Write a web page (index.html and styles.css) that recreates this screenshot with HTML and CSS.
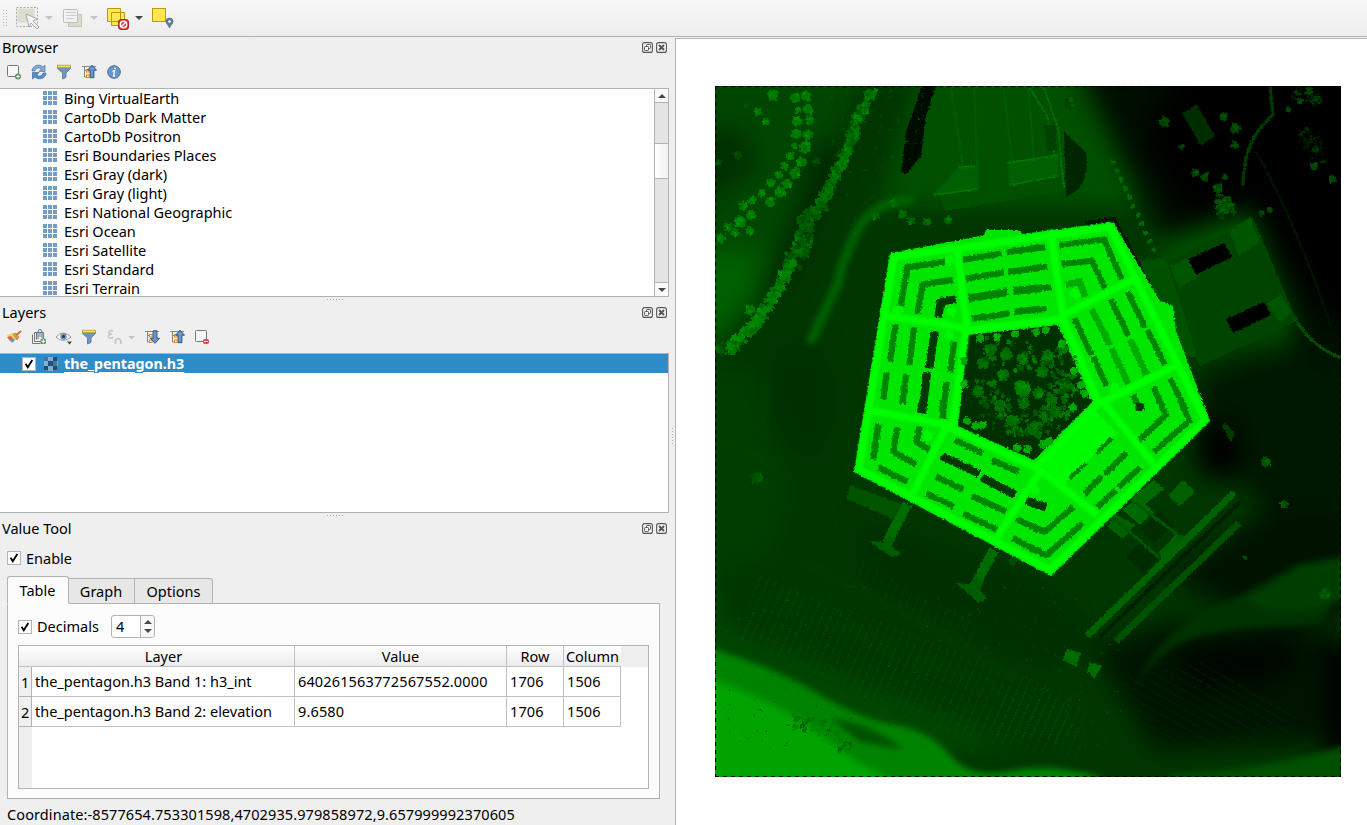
FILE: index.html
```html
<!DOCTYPE html>
<html lang="en">
<head>
<meta charset="utf-8">
<title>Map viewer</title>
<link rel="stylesheet" href="styles.css">
</head>
<body>
<svg class="defs" width="0" height="0">
  <symbol id="float" viewBox="0 0 11 11"><rect x=".6" y=".6" width="9.8" height="9.8" rx="2" fill="#f6f6f6" stroke="#555" stroke-width="1.1"/><rect x="4.5" y="2.5" width="4" height="4" rx=".8" fill="none" stroke="#555"/><rect x="2.5" y="4.5" width="4" height="4" rx=".8" fill="#f6f6f6" stroke="#555"/></symbol>
  <symbol id="close" viewBox="0 0 11 11"><rect x=".6" y=".6" width="9.8" height="9.8" rx="2" fill="#f6f6f6" stroke="#555" stroke-width="1.1"/><path d="M3 3l5 5M8 3l-5 5" stroke="#555" stroke-width="1.9"/></symbol>
  <symbol id="grid" viewBox="0 0 14 14"><path d="M0 0h4v4H0zM5 0h4v4H5zM10 0h4v4h-4zM0 5h4v4H0zM5 5h4v4H5zM10 5h4v4h-4zM0 10h4v4H0zM5 10h4v4H5zM10 10h4v4h-4z" fill="#729dc7"/></symbol>
  <symbol id="check" viewBox="0 0 14 14"><rect x=".5" y=".5" width="13" height="13" fill="#fff" stroke="#b4b4b4"/><path d="M3.6 6.800l2.200 3.500L10.300 3" fill="none" stroke="#000" stroke-width="1.800"/></symbol>
  <symbol id="funnel" viewBox="0 0 16 16"><path d="M1.500 3h13v1.500L10 9v4.500L6.500 15V9l-5-4.500z" fill="#6f96bd" stroke="#587999" stroke-width=".8"/><rect x="1.500" y="1.200" width="13" height="2.500" fill="#f9e54c" stroke="#a99528" stroke-width=".7"/></symbol>
  <symbol id="collapse" viewBox="0 0 16 16"><path d="M1 2.500h14M3.500 2.500v10.500h2M3.500 6.500h2" fill="none" stroke="#888"/><rect x="5.500" y="5.500" width="2.500" height="2.500" fill="#fff" stroke="#ee8a13"/><rect x="5.500" y="11" width="2.500" height="2.500" fill="#fff" stroke="#ee8a13"/><path d="M11 1.200l4.500 5h-2.600v7.500H9.100V6.200H6.500z" fill="#6c98c6" stroke="#2d5580"/></symbol>
  <symbol id="expand" viewBox="0 0 16 16"><path d="M1 2.500h14M3.500 2.500v10.500h2M3.500 6.500h2" fill="none" stroke="#888"/><rect x="5.500" y="5.500" width="2.500" height="2.500" fill="#fff" stroke="#ee8a13"/><rect x="5.500" y="11" width="2.500" height="2.500" fill="#fff" stroke="#ee8a13"/><path d="M11 14.300l4.500-5h-2.600V1.800H9.100v7.500H6.500z" fill="#6c98c6" stroke="#2d5580"/></symbol>
</svg>
<div class="app">
  <header class="toolbar">
    <svg width="190" height="36" viewBox="0 0 190 36">
      <path d="M3.500 10v17M6.500 10v17" stroke="#bbb" stroke-dasharray="1 2"/>
      <rect x="17.500" y="8.500" width="17" height="14" fill="#dcdccf"/>
      <rect x="16.500" y="7.500" width="21" height="19" fill="none" stroke="#aaa" stroke-dasharray="2 1.500"/>
      <path d="M26 14l12 5-5 2 6 6-2 2-6-6-2 4z" fill="#f4f4f4" stroke="#aaa"/>
      <path d="M45 16h8l-4 4zM90 16h8l-4 4z" fill="#c4c4c4"/>
      <path d="M68.500 14.500h13v12h-13z" fill="#dadace" stroke="#c4c4b8"/>
      <rect x="63.500" y="9.500" width="14" height="13" rx="1" fill="#f1f1f1" stroke="#bcbcbc"/>
      <path d="M66 12.500h10M66 15.500h10M66 18.500h8" stroke="#ccc"/>
      <path d="M107.500 8.500h13v13h-13zM111.500 12.500h13v13h-13z" fill="#fee84d" stroke="#b79a12"/>
      <rect x="118.500" y="19.500" width="10" height="10" rx="2.500" fill="#d93232" stroke="#b32626"/>
      <circle cx="123.500" cy="24.500" r="3.200" fill="none" stroke="#fff" stroke-width="1.500"/><path d="M121.500 26.500l4-4" stroke="#fff" stroke-width="1.300"/>
      <path d="M135 16h8l-4 4z" fill="#444"/>
      <rect x="152.500" y="8.500" width="13" height="13" fill="#fee84d" stroke="#b79a12"/>
      <path d="M169.500 28c-1-3-3.500-4-3.500-6.500a3.500 3.500 0 0 1 7 0c0 2.500-2.500 3.500-3.500 6.500z" fill="#5e7e98" stroke="#4b677e" stroke-width=".7"/><circle cx="169.500" cy="21.500" r="1.300" fill="#fff"/>
    </svg>
  </header>
  <div class="main">
    <aside class="docks">
      <section class="dock browser">
        <div class="title"><span>Browser</span><div class="buttons"><svg><use href="#float"/></svg><svg><use href="#close"/></svg></div></div>
        <div class="tools">
          <svg viewBox="0 0 16 16"><rect x="1.500" y="1.500" width="11" height="11" rx="1" fill="#f6f6f6" stroke="#777"/><circle cx="12" cy="12.500" r="3" fill="#5a9560"/><path d="M10.300 12.500h3.400M12 10.800v3.400" stroke="#fff"/></svg>
          <svg viewBox="0 0 16 16"><path d="M1 7c0-5 7-8 11-4l2-2v6.500H8L10.200 5C8 3 4.500 4 4 7z" fill="#82aad8" stroke="#4878ad" stroke-width=".7"/><path d="M15 9c0 5-7 8-11 4l-2.500 2V8.500H8L5.800 11C8 13 11.500 12 12 9z" fill="#5b8dc7" stroke="#3d6da3" stroke-width=".7"/></svg>
          <svg><use href="#funnel"/></svg>
          <svg><use href="#collapse"/></svg>
          <svg viewBox="0 0 16 16"><circle cx="8" cy="8" r="6.300" fill="#6595cd" stroke="#416b9c"/><circle cx="9" cy="4.500" r="1.100" fill="#fff"/><path d="M6.500 7h2l-1 5h1.500" fill="none" stroke="#fff" stroke-width="1.300"/></svg>
        </div>
        <div class="tree">
          <ul class="sources">
            <li><svg><use href="#grid"/></svg><span>Bing VirtualEarth</span></li>
            <li><svg><use href="#grid"/></svg><span>CartoDb Dark Matter</span></li>
            <li><svg><use href="#grid"/></svg><span>CartoDb Positron</span></li>
            <li><svg><use href="#grid"/></svg><span>Esri Boundaries Places</span></li>
            <li><svg><use href="#grid"/></svg><span>Esri Gray (dark)</span></li>
            <li><svg><use href="#grid"/></svg><span>Esri Gray (light)</span></li>
            <li><svg><use href="#grid"/></svg><span>Esri National Geographic</span></li>
            <li><svg><use href="#grid"/></svg><span>Esri Ocean</span></li>
            <li><svg><use href="#grid"/></svg><span>Esri Satellite</span></li>
            <li><svg><use href="#grid"/></svg><span>Esri Standard</span></li>
            <li><svg><use href="#grid"/></svg><span>Esri Terrain</span></li>
          </ul>
          <div class="scroll"><div class="arrow"><i class="up"></i></div><div class="track-a"></div><div class="thumb"></div><div class="track-b"></div><div class="arrow last"><i class="down"></i></div></div>
        </div>
      </section>
      <div class="splitter"></div>
      <section class="dock layers">
        <div class="title"><span>Layers</span><div class="buttons"><svg><use href="#float"/></svg><svg><use href="#close"/></svg></div></div>
        <div class="tools">
          <svg viewBox="0 0 16 16"><path d="M1 6l6-2 4 5-4 4-3-1z" fill="#f5d94c"/><path d="M1 8l4-1 2 3-3 2z" fill="#e85a4f"/><path d="M4 11l3-2 2 2-3 3z" fill="#6895cb"/><path d="M7 5l4 6 2-3-3-4z" fill="#d79b4b" stroke="#9c6b2d" stroke-width=".5"/><path d="M10.500 6L15 2" stroke="#c07c32" stroke-width="2"/></svg>
          <svg viewBox="0 0 16 16"><path d="M1.500 5.500v9h8M3.500 3.500v9h9v-9h-9M5.500 4v6.500" fill="none" stroke="#777"/><path d="M7 10V3q0-2.500 2-2.500T11 3v6M9 3v5" fill="none" stroke="#56799a"/><rect x="9.500" y="9.500" width="5.500" height="5.500" rx="1.500" fill="#5a9960"/><path d="M10.300 12.300h4M12.300 10.300v4" stroke="#fff"/></svg>
          <svg viewBox="0 0 16 16"><path d="M0 8q7-8 15 0-8 7-15 0z" fill="#f7f7f7" stroke="#999"/><circle cx="7.500" cy="7.500" r="3.200" fill="#6f94b9"/><circle cx="7.500" cy="7.500" r="1.500" fill="#26384b"/><path d="M11 12.500h5l-2.500 3z" fill="#444"/></svg>
          <svg><use href="#funnel"/></svg>
          <svg class="wide" viewBox="0 0 30 16"><path d="M6.500 2Q2 0 2 3.500q.5 1.500 3.500 1.500Q1 5 1.500 8q1.500 2.500 5 .500M8.500 15v-3.500q3-4 6 0V15M9 12v3M14 12v3" fill="none" stroke="#c4c4c4" stroke-width="1.500"/><path d="M22 7h7l-3.500 3.500z" fill="#c4c4c4"/></svg>
          <svg><use href="#expand"/></svg>
          <svg><use href="#collapse"/></svg>
          <svg viewBox="0 0 16 16"><rect x="1.500" y="1.500" width="11" height="11" rx="1" fill="#f6f6f6" stroke="#777"/><rect x="9" y="10" width="6" height="5" rx="2" fill="#e24249"/><path d="M10 12.500h4" stroke="#fff"/></svg>
        </div>
        <div class="tree layer-list">
          <div class="layer">
            <svg><use href="#check"/></svg>
            <svg viewBox="0 0 14 14"><rect width="14" height="14" fill="#4e83ad"/><path d="M0 0h4v4H0zM9 0h4v4H9zM4 4h5v5H4zM0 9h4v4H0zM9 9h4v4H9z" fill="#1f4f76"/><path d="M4 0h5v4H4zM0 4h4v5H0zM9 4h5v5H9zM4 9h5v5H4z" fill="#7eaed2"/><path d="M0 0h4v4H0zM9 4h4v5H9z" fill="#3e789f"/></svg>
            <span>the_pentagon.h3</span>
          </div>
        </div>
      </section>
      <div class="splitter"></div>
      <section class="dock value">
        <div class="title"><span>Value Tool</span><div class="buttons"><svg><use href="#float"/></svg><svg><use href="#close"/></svg></div></div>
        <label class="enable"><svg class="cb"><use href="#check"/></svg><span>Enable</span></label>
        <div class="tabs"><div class="tab active">Table</div><div class="tab graph">Graph</div><div class="tab options">Options</div></div>
        <div class="pane">
          <div class="decimals"><svg class="cb"><use href="#check"/></svg><span>Decimals</span><div class="spin"><b>4</b><div class="steps"><i class="up"></i><i class="down"></i></div></div></div>
          <div class="table">
            <div class="row head"><div class="corner">Layer</div><div>Value</div><div>Row</div><div>Column</div></div>
            <div class="row"><div class="num">1</div><div>the_pentagon.h3 Band 1: h3_int</div><div class="digits">640261563772567552.0000</div><div class="digits">1706</div><div class="digits">1506</div></div>
            <div class="row"><div class="num">2</div><div>the_pentagon.h3 Band 2: elevation</div><div class="digits">9.6580</div><div class="digits">1706</div><div class="digits">1506</div></div>
            <div class="gutter"></div>
          </div>
        </div>
        <div class="coord">Coordinate:-8577654.753301598,4702935.979858972,9.657999992370605</div>
      </section>
    </aside>
    <div class="handle"></div>
    <main class="canvas">
      <svg class="map" width="626" height="691" viewBox="715 86 626 691">
        <defs>
          <filter id="b3" filterUnits="userSpaceOnUse" x="690" y="60" width="680" height="745" color-interpolation-filters="sRGB"><feGaussianBlur stdDeviation="3"/></filter>
          <filter id="b12" filterUnits="userSpaceOnUse" x="650" y="20" width="760" height="830" color-interpolation-filters="sRGB"><feGaussianBlur stdDeviation="12"/></filter>
          <filter id="b1" color-interpolation-filters="sRGB"><feGaussianBlur stdDeviation="1.300"/></filter>
          <filter id="rough" filterUnits="userSpaceOnUse" x="715" y="86" width="626" height="691" color-interpolation-filters="sRGB"><feTurbulence type="fractalNoise" baseFrequency=".45" numOctaves="1" seed="4" result="n"/><feDisplacementMap in="SourceGraphic" in2="n" scale="4" xChannelSelector="R" yChannelSelector="G"/></filter>
          <filter id="leafy" filterUnits="userSpaceOnUse" x="715" y="86" width="626" height="691" color-interpolation-filters="sRGB"><feTurbulence type="fractalNoise" baseFrequency=".4" numOctaves="1" seed="9" result="n"/><feDisplacementMap in="SourceGraphic" in2="n" scale="6" xChannelSelector="R" yChannelSelector="G"/><feGaussianBlur stdDeviation=".5"/></filter>
          <pattern id="cars" width="8" height="9" patternUnits="userSpaceOnUse" patternTransform="rotate(24)"><path d="M2 0v7" stroke="#005800" stroke-width="1.300" stroke-dasharray="2 1"/></pattern>
          <pattern id="cars2" width="8" height="9" patternUnits="userSpaceOnUse" patternTransform="rotate(-60)"><path d="M2 0v7" stroke="#002800" stroke-width="1.300" stroke-dasharray="2 1"/></pattern>
        </defs>
        <rect x="715" y="86" width="626" height="691" fill="#003600"/>
        <g filter="url(#b12)">
          <path d="M680 50H870L800 230 680 380z" fill="#004600"/>
          <path d="M690 135l50-10 20 40-70 50z" fill="#002f00"/>
          <path d="M690 250h75l-10 50-60 60z" fill="#006000"/>
          <path d="M800 200l20-60 20 10-50 130-25 20z" fill="#002200"/>
          <path d="M880 205H1140L1200 350 1300 330 1250 210 1130 180 1060 50H930z" fill="#005000"/>
          <path d="M1075 50H1390V570L1290 560 1215 420 1300 340 1250 210 1160 240z" fill="#000d00"/>
          <path d="M1190 50H1390V340L1320 310 1250 200 1190 225 1145 140z" fill="#000"/>
          <path d="M1200 380l40-20 60-10 90 20v160l-110-20-80-50z" fill="#001700"/>
          <path d="M1170 580l80-60 140-20V600l-110 30z" fill="#001200"/>
          <path d="M680 500l50 130 300 120H680z" fill="#004600"/>
          <path d="M1095 650l80-30 160 10 20 110-200 10z" fill="#001400"/>
          <path d="M1180 650l80-12 50 12-30 30-90 10z" fill="#000600"/>
          <path d="M680 370l80 0 30 120-20 70-90 20z" fill="#003e00"/>
          <ellipse cx="800" cy="400" rx="35" ry="60" fill="#003000"/>
          <path d="M860 520l180 60 70 60-60 30-190-80z" fill="#002f00"/>
          <ellipse cx="1218" cy="450" rx="22" ry="30" fill="#000"/>
          <path d="M1342 640v130" stroke="#000" stroke-width="30"/>
        </g>
        <path d="M760 575L1060 690 1080 740 960 735 735 640z" fill="url(#cars)" opacity=".6"/>
        <path d="M860 560l120 65-10 30-130-70zM1000 690l90 20-10 50-90-15z" fill="url(#cars)" opacity=".4"/>
        <path d="M1120 680l90-20 90 60-20 35-120-5z" fill="url(#cars2)" opacity=".8"/>
        <g filter="url(#b3)" fill="none">
          <path d="M690 642Q770 665 815 692T895 725 950 755 1010 771 1100 777V810H690z" fill="#008400"/>
          <path d="M690 672Q780 700 835 745T960 795H690z" fill="#00a300"/>
          <path d="M830 718q40 5 75 32l-45-8z" fill="#005000"/>
          <path d="M1370 552l-72 12-68 37q-40 10-72 48-15 18-23 40 20-35 50-48 35-13 70-13 20 0 65-4l20-30z" fill="#003200"/>
          <path d="M1245 600q30-15 55-35l70-10-5 38-50 15q-40 8-70-8z" fill="#003e00"/>
          <path d="M1170 774q90 0 200-36v80h-200z" fill="#005000"/>
          <path d="M800 560l120 62 100 60" stroke="#003a00" stroke-width="8"/>
          <path d="M914 200q-42 0-58 33t-18 50l-28 60" stroke="#006400" stroke-width="9"/>
          <path d="M765 372q3 50-5 100M720 440l50 20" stroke="#004500" stroke-width="2"/>
        </g>
        <g filter="url(#rough)">
          <path d="M924 86h133l3 105-115 20-7-20-14-35 4-20z" fill="#005000"/>
          <path d="M922 86h14l-10 30-5 40-14 18-6-2 5-40z" fill="#000c00"/>
          <path d="M933 195l26-28 16-1 4 23zM1008 163l50-8 1 20-50 10z" fill="#005f00"/>
          <path d="M933 195l44-6M959 167l16-1M1008 163l50-8M1010 185l49-9" stroke="#007800" stroke-width="1.500"/>
          <path d="M951 88l12 78M974 88l4 100M1004 88l8 75M1028 88l6 70" stroke="#005c00" stroke-width="2"/>
          <path d="M1030 88l18 30 6 35M1044 88l14 40 6 60" stroke="#007000" stroke-width="1.500" fill="none"/>
          <path d="M1044 125h12v26h-9z" fill="#004000"/>
          <path d="M1064 132l22 20q5 35-20 45z" fill="#002600"/>
          <path d="M1182 113l15-8 18 31-14 10z" fill="#002d00"/>
          <path d="M1270 86l3 29q-30 25-30 70" stroke="#003c00" stroke-width="3" fill="none"/>
          <path d="M1256 152q40 70 75 175" stroke="#001600" stroke-width="2" fill="none"/>
          <path d="M1168 262l70-38 14-8 45 105-97 45-35-60z" fill="#004400"/>
          <path d="M1140 260l26-2 32 100-25-5z" fill="#005000"/>
          <path d="M1230 230l20-12 10 24-22 14zM1170 266l17-8 12 18-20 12zM1267 304l14-10 10 18-12 10z" fill="#005600"/>
          <path d="M1188 259l36-16 8 14-36 18zM1226 319l38-17 7 13-38 18z" fill="#000"/>
          <path d="M1165 258l72-32" stroke="#004a00" stroke-width="4"/>
          <path d="M1295 318q15 28 46 40" stroke="#005000" stroke-width="3" fill="none"/>
          <path d="M850 485l51 19-8 15-46-20z" fill="#005400"/>
          <path d="M907 504L887 543" stroke="#006c00" stroke-width="10"/><path d="M869 541l14 1 7-7 5 4-3 8 10 7-10 3-14-9z" fill="#005c00"/>
          <path d="M994 550l-20 37" stroke="#006c00" stroke-width="10"/><path d="M956 583l14 1 7-7 7 4-4 9 7 9-9 4-10-10z" fill="#005c00"/>
          <path d="M1154 480l10 9-21 17-12-8zM1137 498l17 14-14 13-18-15z" fill="#006800"/>
          <path d="M1183 480l12 11-15 15-12-10zM1113 513l22 12-12 14-15-12zM1177 533l14 6-27 24-6-10z" fill="#006000"/>
          <path d="M1160 512l14 13-20 18-14-14zM1143 540l18 15-18 18-17-16z" fill="#002c00"/>
          <path d="M1110 515l50 43M1132 500l55 42" stroke="#005600" stroke-width="3"/>
          <path d="M1234 493L1087 636" stroke="#006200" stroke-width="7"/><path d="M1239 523L1116 641" stroke="#005000" stroke-width="7"/>
          <path d="M1240 502L1100 637" stroke="#002000" stroke-width="4"/>
          <path d="M1067 649l14 4-5 14-13-7zM1090 662l12 4-7 12-8-7z" fill="#006c00"/>
          <path d="M1225 422l10 12-4 8-9-15z" fill="#003c00"/>
          <path d="M1085 223l29-4 36 68" stroke="#001a00" stroke-width="4" fill="none"/>
          <path d="M890 253l70-13 24-5 2-5h32l5 4 90-12 47 79 13 5 3 25 34 90-159 155-197-104z" fill="#00e600"/>
          <path d="M968 335l90-10 34 77-58 58-76-34z" fill="#003000"/>
          <g transform="translate(850 210) scale(.33333)" fill="none" stroke="#008500" stroke-width="19">
            <path d="M152 288L172 172 285 155M202 312L218 222 308 210M338 150l117-20M470 127l100-15M348 206l114-19M475 185l95-11M367 326l111-16M492 306l78-10M136 345L120 455M110 487l-10 81M192 352L178 465M168 495l-11 85M312 395l-12 92M290 515l-12 110"/>
            <path d="M355 265l117-19M490 243l80-8" stroke-width="24"/>
            <path d="M265 322l7-47 46-7M254 364L238 475M232 487L216 610" stroke="#003a00" stroke-width="24"/>
          </g>
          <g transform="translate(1030 210) scale(.33333)" fill="none" stroke="#008500" stroke-width="18">
            <path d="M0 118l46-6M0 175l52-5M0 238l64-6M0 302l50-6M88 106L222 88l53 120M95 162l91-10 39 83M133 325l52 110M190 440l40 88M243 268l52 110M293 245l52 107M352 360l53 105M370 530l30 70M420 505l48 95M308 555l17 35"/>
            <path d="M185 298l55 107M245 415l50 107M300 388l50 107M105 225l45-10 15 45" stroke="#00ac00" stroke-width="20"/>
          </g>
          <g transform="translate(850 400) scale(.33333)" fill="none" stroke="#008500" stroke-width="19">
            <path d="M280 0l-4 35M158 0v12M85 72L70 178M142 82l-12 73 68 38M208 80l-8 45 38 25M85 202l87 43M315 120l83 40M425 180l80 35M257 230l83 38M365 288l103 47M230 280l82 40M340 340l102 50M500 358l70 32M487 415l83 40"/>
            <path d="M217 0l-4 38M275 168l113 54M395 232l100 52M528 302l60 20" stroke="#003a00" stroke-width="24"/>
          </g>
          <g transform="translate(1030 400) scale(.33333)" fill="none" stroke="#008500" stroke-width="18">
            <path d="M40 200L185 20 260 100 100 255z" fill="#00fa00" stroke="none"/>
            <path d="M325 125l83-80-20-45M372 155L478 62 450 0M225 222l65-64M162 282l53-52M265 262l65-60M202 322l56-52M0 378l45 17 85-75M0 445l50 20 108-95"/>
            <path d="M198 160l48-45M118 235l50-45" stroke-width="12"/>
            <path d="M0 305l38 15M318 18l24 6" stroke="#003a00" stroke-width="24"/>
          </g>
        </g>
        <g filter="url(#b1)" fill="none" stroke="#00ff00" stroke-width="7">
          <path d="M894 257l216-30 95 193-155 150-191-101z"/>
          <path d="M966 330l97-11 36 84-63 65-84-39z"/>
          <path d="M957 248l10 80-85-13M1050 230l13 85 75-38M1177 365l-74 37 50 61M1097 515l-56-45-44 67M913 493l34-68-78-15"/>
        </g>
        <g id="trees" filter="url(#leafy)"></g>
        <path d="M715.500 86v691M715 776.500h626M1340.500 86v691M715 86.500h626" stroke="#000" stroke-width="1" stroke-dasharray="4 4" fill="none"/>
      </svg>
    </main>
  </div>
</div>
<script src="map.js"></script>
</body>
</html>
```
FILE: map.js
```js
// Scatters vegetation over the terrain; a fixed seed keeps it stable.
let seed = 11;
const rnd = () => (seed = (seed * 16807) % 2147483647) / 2147483647;
const layer = document.getElementById('trees');
function blob(x, y, r, g) {
  const c = document.createElementNS('http://www.w3.org/2000/svg', 'circle');
  c.setAttribute('cx', x.toFixed(1));
  c.setAttribute('cy', y.toFixed(1));
  c.setAttribute('r', r.toFixed(1));
  c.setAttribute('fill', `rgb(0,${Math.round(g)},0)`);
  layer.appendChild(c);
}
function tree(x, y, r, g) {
  blob(x, y, r, g);
  for (let i = 0; i < 5; i++) blob(x + (rnd() - .5) * r * 1.3, y + (rnd() - .5) * r * 1.3, r * .35, g + (rnd() - .3) * 45);
}
function along(points, n, spread, rMin, rMax, g) {
  for (let i = 0; i < n; i++) {
    const t = rnd() * (points.length - 1), k = Math.floor(t), f = t - k;
    const [x1, y1] = points[k], [x2, y2] = points[k + 1];
    blob(x1 + (x2 - x1) * f + (rnd() - .5) * spread, y1 + (y2 - y1) * f + (rnd() - .5) * spread, rMin + rnd() * (rMax - rMin), g + (rnd() - .5) * 50);
  }
}
[[773,95,5.5],[758,112,4],[766,122,3.5],[795,98,5],[806,96,5],[808,109,5],[798,110,3],[797,121,5],[810,120,4.5],[796,134,5],[808,135,5],[805,147,6],[794,146,3],[790,156,4],[801,162,5],[785,166,4],[795,173,5.5],[779,175,4],[771,183,4.5],[787,184,5],[780,192,5.5],[762,193,4],[770,202,5],[752,200,4],[743,206,4.5],[751,215,5],[740,222,6],[728,227,4],[735,233,4],[721,238,5],[750,231,4],[750,310,5]].forEach(([x,y,r]) => tree(x, y, r, 118));
[[816,161,3.5],[738,155,4],[718,162,4],[746,105,3]].forEach(([x,y,r]) => tree(x, y, r, 75));
along([[874,88],[857,120],[846,155],[833,180],[820,206]], 300, 9, 1.2, 3, 110);
along([[820,206],[806,224],[803,245],[790,265]], 200, 15, 1.2, 3, 92);
along([[790,265],[775,294],[755,325],[728,350]], 280, 9, 1.2, 3, 122);
along([[724,345],[715,352]], 12, 10, 1, 3, 100);
[[902,214],[911,221],[927,222],[948,220],[875,216],[895,203]].forEach(([x,y]) => tree(x, y, 4, 98));
for (let i = 0; i < 11; i++) tree(1113 + i * 4.1, 162 + i * 8.8, 2.6, 100);
[[1164,122,5],[1182,147,3],[1195,173,4],[1205,177,4],[1224,117,4],[1235,128,5],[1235,145,4],[1218,188,5],[1225,177,3],[1262,213,3],[1270,210,3],[1314,166,4],[1332,179,4],[1288,110,3],[1300,101,3],[1309,91,4],[1317,99,4],[1070,104,6]].forEach(([x,y,r]) => tree(x, y, r, 68));
along([[1222,200],[1226,211]], 90, 17, 1, 2.5, 75);
along([[1305,130],[1320,155]], 60, 16, .7, 2, 38);
along([[1290,88],[1318,100]], 30, 14, .7, 2, 45);
[[990,350],[1006,354],[1003,375],[1048,356],[1063,348],[1023,358],[1020,386],[983,363],[978,391],[1000,406],[1042,372],[1039,393],[1065,384],[1052,400],[1012,421],[1033,429],[1055,412],[1024,403]].forEach(([x,y]) => tree(x, y, 6, 108));
along([[985,350],[1065,365],[1060,410],[1020,430],[985,390]], 260, 28, .8, 2.8, 105);
[[980,338],[997,337],[1015,334],[1036,332],[1046,330],[1062,344],[1074,371],[1081,385],[1085,394],[967,421],[976,426],[983,425],[964,361],[964,384],[1017,448],[1027,450],[1043,445],[1049,441],[1073,407]].forEach(([x,y]) => tree(x, y, 4, 165));
tree(1023, 389, 8, 120);
[[951,312],[949,335],[1075,294],[950,260],[898,310],[928,436],[1035,490],[1115,388]].forEach(([x,y]) => blob(x, y, 5, 248));
[[1325,594,6],[1266,462,5],[757,478,6],[1013,561,4],[1245,557,2],[1284,504,4]].forEach(([x,y,r]) => tree(x, y, r, 80));
along([[795,722],[820,725],[850,752]], 60, 14, .8, 2.5, 115);
for (let i = 0; i < 420; i++) blob(725 + rnd() * 400, 580 + rnd() * 170, .5 + rnd() * .3, 70 + rnd() * 22);
for (let i = 0; i < 160; i++) {
  const x = 830 + rnd() * 100, y = 90 + rnd() * 140;
  blob(x, y, .5 + rnd() * .5, 82);
}
```
FILE: styles.css
```css
* { box-sizing: border-box; }
body { margin: 0; width: 1367px; height: 825px; overflow: hidden; background: #efefef; color: #000; font: 14.5px/18px "Noto Sans", "Open Sans", sans-serif; }
.defs { display: block; position: absolute; }
svg { display: block; flex: none; }
.app { height: 825px; display: flex; flex-direction: column; }
.toolbar { height: 37px; border-bottom: 1px solid #b2b2b2; background: linear-gradient(#f7f7f7, #ededed); }
.main { flex: 1; display: flex; min-height: 0; }
.docks { width: 669px; display: flex; flex-direction: column; }
.title { display: flex; justify-content: space-between; height: 22px; padding: 1px 2px 0; white-space: nowrap; }
.buttons { display: flex; gap: 3px; padding-top: 4px; }
.buttons svg { width: 11px; height: 11px; }
.tools { display: flex; align-items: center; gap: 9px; padding-left: 6px; height: 26px; }
.tools svg { width: 16px; height: 16px; }
.tools .wide { width: 29px; margin: 0 -1px 0 1px; }
.browser { height: 260px; }
.browser .tools { margin-bottom: 3px; }
.tree { border: 1px solid #b2b2b2; border-left: 0; background: #fff; height: 209px; display: flex; overflow: hidden; }
.sources { list-style: none; margin: 0; padding: 0; width: 654px; }
.sources li { display: flex; align-items: center; height: 19px; padding-left: 43px; gap: 7px; white-space: nowrap; letter-spacing: -.03px; }
.sources span { margin-top: -2px; }
.sources svg { width: 14px; height: 14px; margin-top: -1px; }
.scroll { width: 14px; border-left: 1px solid #b2b2b2; background: #e4e4e4; }
.arrow { height: 14px; border-bottom: 1px solid #b2b2b2; background: #fafafa; display: flex; align-items: center; justify-content: center; }
.arrow.last { border-bottom: 0; border-top: 1px solid #b2b2b2; }
.up, .down { border: 4px solid transparent; width: 0; height: 0; }
.up { border-top: 0; border-bottom-color: #484848; }
.down { border-bottom: 0; border-top-color: #484848; }
.track-a { height: 40px; }
.thumb { height: 36px; border: solid #b2b2b2; border-width: 1px 0; background: linear-gradient(90deg, #fff, #f2f2f2); }
.track-b { height: 103px; }
.splitter { height: 5px; width: 17px; margin-left: 326px; background: radial-gradient(circle at 1.5px 2.5px, #aaa .7px, transparent 1px) 0 0/3px 5px repeat-x; }
.layers { height: 211px; }
.layers .tools { height: 26px; margin-bottom: 3px; }
.layer-list { height: 160px; }
.layer { height: 19px; width: 668px; background: #308cc6; display: flex; align-items: center; padding-left: 22px; color: #fff; font-weight: 700; font-size: 14.3px; }
.layer svg { width: 14px; height: 14px; }
.layer svg + svg { margin: 0 6px 0 8px; }
.layer span { text-decoration: underline; text-underline-offset: 3px; }
.value { height: 307px; }
.enable { display: flex; align-items: center; gap: 5px; padding: 8px 0 0 7px; height: 28px; }
.cb { width: 14px; height: 14px; }
.tabs { display: flex; align-items: flex-end; height: 28px; margin: 8px 0 -1px 7px; position: relative; }
.tab { height: 26px; border: 1px solid #b2b2b2; border-left: 0; background: #e7e7e7; text-align: center; padding-top: 3px; border-radius: 0 3px 0 0; }
.tab.active { width: 62px; height: 28px; border-left: 1px solid #b2b2b2; border-bottom-color: #fcfcfc; background: #fcfcfc; border-radius: 3px 3px 0 0; padding-top: 4px; padding-right: 1px; }
.graph { width: 66px; border-radius: 0; padding-right: 1px; }
.options { width: 78px; }
.pane { width: 653px; height: 196px; border: 1px solid #b2b2b2; background: #fcfcfc; margin-left: 7px; padding: 11px 10px 0; }
.decimals { display: flex; align-items: center; height: 23px; gap: 5px; }
.decimals > span { margin-top: -2px; width: 62px; }
.spin { width: 44px; height: 23px; display: flex; border: 1px solid #b2b2b2; border-radius: 3px; background: #fff; margin-left: 7px; }
.spin b { width: 28px; padding: 1px 0 0 4px; font-weight: 400; }
.steps { flex: 1; border-left: 1px solid #b2b2b2; background: #f7f7f7; display: flex; flex-direction: column; align-items: center; justify-content: center; gap: 5px; border-radius: 0 3px 3px 0; }
.table { width: 631px; height: 144px; margin-top: 7px; border: 1px solid #b2b2b2; background: #fff; display: flex; flex-direction: column; }
.row { display: grid; grid-template-columns: 13px 263px 212px 57px 57px; height: 30px; }
.row div { border: solid #c1c1c1; border-width: 0 1px 1px 0; padding: 5px 0 0 3px; white-space: nowrap; }
.row .digits { letter-spacing: .14px; }
.row.head { height: 21px; background: #efefef; }
.row.head div { padding: 1px 0 0; text-align: center; background: linear-gradient(#fff, #ececec); }
.row.head .corner { grid-column: span 2; padding-left: 14px; }
.row.head div:last-child { border-right: 0; }
.row .num { background: #f0f0f0; border-color: #b2b2b2; padding: 6px 0 0 2px; }
.gutter { width: 13px; flex: 1; background: #efefef; }
.coord { padding: 6px 0 0 7px; white-space: nowrap; letter-spacing: .095px; }
.handle { width: 6px; background: radial-gradient(circle at 3.5px 1.5px, #aaa .7px, transparent 1px) 0 0/6px 3px repeat-y; height: 18px; margin-top: 390px; }
.canvas { flex: 1; margin-top: 1px; border: solid #b2b2b2; border-width: 1px 0 0 1px; background: #fff; padding: 47px 0 0 39px; }
```
